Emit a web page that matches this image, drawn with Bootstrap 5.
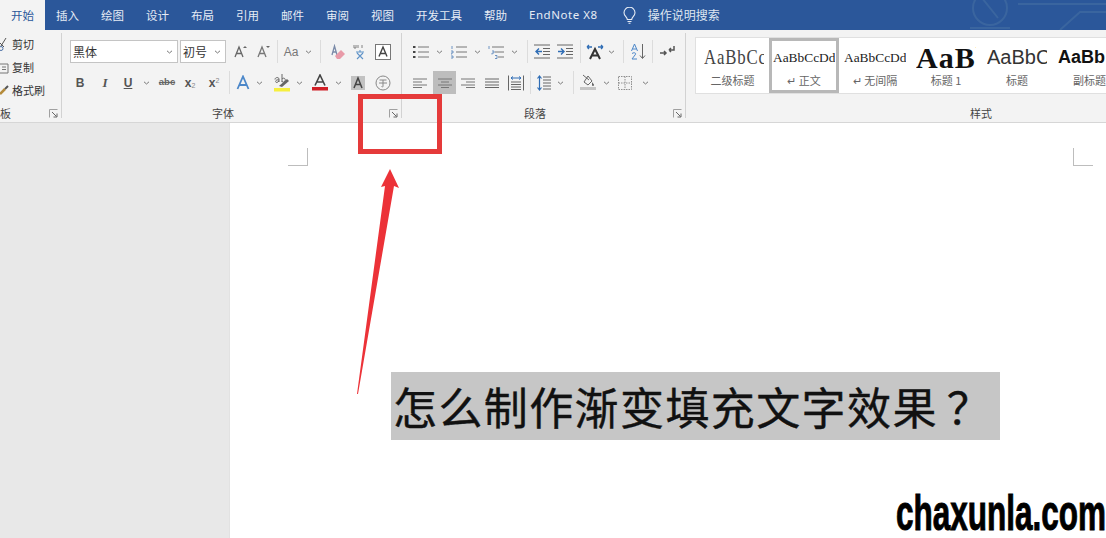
<!DOCTYPE html>
<html lang="zh">
<head>
<meta charset="utf-8">
<title>Word</title>
<link rel="stylesheet" href="https://cdn.jsdelivr.net/npm/bootstrap@5.3.0/dist/css/bootstrap.min.css">
<style>
html,body{height:100%;}
body{width:1106px;height:538px;overflow:hidden;position:relative;background:#e8e8e8;font-family:"Noto Sans CJK SC","Liberation Sans",sans-serif;color:#444;}
.titlebar{height:30px;background:#2b579a;position:relative;overflow:hidden;}
.titlebar .deco{position:absolute;left:900px;top:0;}
.wtabs .nav-link{padding:0 11px;height:30px;line-height:30px;font-size:11.5px;color:#e6ecf5;}
.wtabs .nav-link.active{background:#f3f3f3;color:#2b579a;}
.latin{font-family:"Noto Sans",sans-serif;font-size:11.5px;letter-spacing:.55px;}
.tellme{font-size:12px;color:#dfe6f1;margin-left:14px;gap:12px;height:30px;}
.ribbon{height:93px;background:#f3f3f3;border-bottom:1px solid #d6d6d6;padding:3px 0 4px;}
.rgroup{flex:none;border-right:1px solid #d2d2d2;display:flex;flex-direction:column;}
.g-clip{width:62px;}
.g-font{width:340px;padding:7px 0 0 8px;}
.g-para{width:284px;padding:7px 0 0 8px;}
.g-style{flex:1 1 0;min-width:0;border-right:0;padding:4px 0 0 9px;}
.trow{height:23px;display:flex;align-items:center;}
.trow+.trow{margin-top:8px;}
.slot{flex:none;display:flex;align-items:center;justify-content:center;height:23px;}
.slot svg{flex:none;}
.selcell{background:#bdbdbd;}
.w2{width:2px}.w3{width:3px}.w4{width:4px}.w5{width:5px}.w6{width:6px}.w8{width:8px}.w9{width:9px}.w10{width:10px}.w14{width:14px}.w16{width:16px}.w18{width:18px}.w20{width:20px}.w22{width:22px}.w23{width:23px}.w24{width:24px}.w26{width:26px}.w28{width:28px}.w30{width:30px}.w32{width:32px}.w34{width:34px}.w38{width:38px}
.vsep{flex:none;width:1px;height:23px;background:#dcdcdc;}
.tb{font-family:"Liberation Sans",sans-serif;font-size:12px;color:#555;line-height:1;}
.tbb{font-weight:700;}
.tbi{font-style:italic;font-family:"Liberation Serif",serif;font-size:13px;font-weight:700;}
.tc{font-family:"Liberation Sans",sans-serif;font-size:9.5px;color:#666;font-weight:700;}
.ts{font-size:7px;font-weight:400;color:#888;}
.fsaa{font-family:"Liberation Sans",sans-serif;font-size:12px;color:#777;}
.gfoot{margin-top:auto;margin-bottom:-5px;height:20px;display:grid;align-items:center;font-size:11px;color:#444;line-height:20px;padding-right:3px;}
.gf-font{grid-template-columns:142px auto 1fr;}
.gf-para{grid-template-columns:114px auto 1fr;}
.gf-style{grid-template-columns:275px auto 1fr;}
.launch{justify-self:end;display:flex;}
.fselect{flex:none;height:23px;background:#fff;border:1px solid #c4c4c4;display:flex;align-items:center;justify-content:space-between;padding:0 4px 0 2px;font-size:12px;color:#333;}
.f-name{width:108px;}.f-size{width:46px;margin-left:2px;}
.clipitem{height:23px;font-size:11px;color:#333;display:flex;align-items:center;}
.clipicon{width:12px;flex:none;display:flex;justify-content:flex-start;}
.clipfoot{display:flex;justify-content:space-between;align-items:center;height:20px;margin-top:auto;margin-bottom:-5px;font-size:11px;padding-right:3px;}
.gallery{width:100%;height:57px;background:#fff;border:1px solid #e0e0e0;border-right:0;display:flex;flex:none;}
.styleitem{flex:none;height:55px;overflow:hidden;text-align:center;display:flex;flex-direction:column;align-items:center;padding-top:7px;}
.styleitem .pv{height:25px;line-height:25px;white-space:nowrap;overflow:hidden;color:#222;}
.styleitem .lb{font-size:11px;color:#666;line-height:16px;margin-top:2px;white-space:nowrap;}
.si1{width:73px}.si2{width:70px;border:3px solid #b8b8b8;padding-top:4px;}.si3{width:72px}.si4{width:70px}.si5{width:72px}.si6{width:53px;align-items:flex-end;}
.pv1{font-family:"Liberation Serif",serif;font-size:21px;letter-spacing:1px;width:75px;align-self:flex-start;margin-left:8px;transform:scaleX(.8);transform-origin:left center;color:#444 !important;}
.pv2{font-family:"Liberation Serif",serif;font-size:13.4px;width:62px;}
.pv4{font-family:"Liberation Serif",serif;font-weight:700;font-size:30px;letter-spacing:1px;width:60px;color:#111 !important;}
.pv5{font-family:"Liberation Sans",sans-serif;font-size:20px;width:60px;color:#333 !important;}
.pv6{font-family:"Liberation Sans",sans-serif;font-weight:700;font-size:18px;width:48px;color:#111 !important;text-align:left;}
.workspace{height:415px;}
.leftpane{width:230px;flex:none;background:#e8e8e8;border-right:1px solid #e2e2e2;}
.docpage{flex:1 1 0;background:#fff;}
.marks{padding:25px 13px 0 58px;display:flex;justify-content:space-between;}
.cmark{width:20px;height:18px;border-bottom:1px solid #bdbdbd;}
.cm-l{border-right:1px solid #bdbdbd;}
.cm-r{border-left:1px solid #bdbdbd;}
.headline{margin:206px 0 0 161px;width:609px;height:68px;background:#c6c6c6;font-size:44px;font-weight:400;-webkit-text-stroke:.4px #111;line-height:68px;letter-spacing:1.4px;color:#111;padding-left:2px;white-space:nowrap;overflow:hidden;font-family:"Noto Sans CJK SC",sans-serif;}
.qmark{padding-left:9px;}
.redbox{position:absolute;left:358px;top:94px;width:84px;height:60px;border:5px solid #e53a3a;}
.redarrow{position:absolute;left:340px;top:160px;}
.wmark{position:absolute;left:896px;top:486px;font-family:"Liberation Sans",sans-serif;font-weight:700;font-size:50px;line-height:54px;color:#000;-webkit-text-stroke:1px #000;white-space:nowrap;transform:scaleX(.63);transform-origin:left center;}
</style>
</head>
<body>
<svg width="0" height="0" class="d-block position-absolute">
<defs>
<symbol id="chev" viewBox="0 0 7 4"><path d="M1 .8 3.5 3 6 .8" fill="none" stroke="#777" stroke-width="1"/></symbol>
<symbol id="launch" viewBox="0 0 9 9"><path d="M.5 8.500V.5H8.500" fill="none" stroke="#a0a0a0"/><path d="M3 3 7.500 7.500M8 4.500V8H4.500" fill="none" stroke="#666"/></symbol>
<symbol id="lines" viewBox="0 0 14 10"><path d="M0 1H14M0 4H9M0 7H14M0 9.500H9" stroke="#777" stroke-width="1" fill="none"/></symbol>
</defs>
</svg>

<header class="titlebar d-flex align-items-center">
<svg class="deco" width="206" height="30" viewBox="0 0 206 30"><g fill="none" stroke="#3a659f" stroke-width="2"><circle cx="90" cy="8" r="17"/><path d="M82 -2 98 18M70 28H110M118 4H206M160 30 180 12H206"/></g></svg>
<ul class="nav wtabs flex-nowrap">
<li class="nav-item"><a class="nav-link active" href="#">开始</a></li>
<li class="nav-item"><a class="nav-link" href="#">插入</a></li>
<li class="nav-item"><a class="nav-link" href="#">绘图</a></li>
<li class="nav-item"><a class="nav-link" href="#">设计</a></li>
<li class="nav-item"><a class="nav-link" href="#">布局</a></li>
<li class="nav-item"><a class="nav-link" href="#">引用</a></li>
<li class="nav-item"><a class="nav-link" href="#">邮件</a></li>
<li class="nav-item"><a class="nav-link" href="#">审阅</a></li>
<li class="nav-item"><a class="nav-link" href="#">视图</a></li>
<li class="nav-item"><a class="nav-link" href="#">开发工具</a></li>
<li class="nav-item"><a class="nav-link" href="#">帮助</a></li>
<li class="nav-item"><a class="nav-link latin" href="#">EndNote X8</a></li>
</ul>
<div class="tellme d-flex align-items-center">
<svg width="13" height="17" viewBox="0 0 13 17"><path d="M4.300 12.500C4.300 10 1 9 1 5.700A5.500 5.500 0 0 1 12 5.700C12 9 8.700 10 8.700 12.500ZM4.500 14.500H8.500M5.500 16.300H7.500" fill="none" stroke="#e6ecf5" stroke-width="1.100"/></svg>
<span>操作说明搜索</span>
</div>
</header>

<section class="ribbon d-flex">
<div class="rgroup g-clip">
<div class="clipitem"><span class="clipicon"><svg width="7" height="14" viewBox="0 0 7 14"><path d="M6 0 1 8M0 5l4 4" stroke="#555" fill="none"/><circle cx="1" cy="10.500" r="2" fill="none" stroke="#4a6fa5"/></svg></span>剪切</div>
<div class="clipitem"><span class="clipicon"><svg width="9" height="13" viewBox="0 0 9 13"><path d="M0 3H8V12H0M2 6H6M2 8.500H6" fill="none" stroke="#777"/></svg></span>复制</div>
<div class="clipitem"><span class="clipicon"><svg width="9" height="12" viewBox="0 0 9 12"><path d="M0 9 5 4" stroke="#b58b3a" stroke-width="2.500"/><path d="M5 4 8 1" stroke="#555" stroke-width="2"/></svg></span>格式刷</div>
<div class="clipfoot"><span>板</span><svg width="9" height="9"><use href="#launch"/></svg></div>
</div>

<div class="rgroup g-font">
<div class="trow">
<div class="fselect f-name"><span>黑体</span><svg width="7" height="4"><use href="#chev"/></svg></div>
<div class="fselect f-size"><span>初号</span><svg width="7" height="4"><use href="#chev"/></svg></div>
<span class="slot w28"><svg width="13" height="13" viewBox="0 0 13 13"><path d="M1 12 5 2 9 12M2.500 8.500H7.500" fill="none" stroke="#666" stroke-width="1.300"/><path d="M9 3 11 1 13 3" fill="#666"/></svg></span>
<span class="slot w18"><svg width="13" height="13" viewBox="0 0 13 13"><path d="M1 12 5 2 9 12M2.500 8.500H7.500" fill="none" stroke="#777" stroke-width="1.300"/><path d="M9 1 11 3 13 1" fill="#666"/></svg></span>
<span class="slot w5"></span><i class="vsep"></i>
<span class="slot w26"><span class="fsaa">Aa</span></span>
<span class="slot w8"><svg width="7" height="4"><use href="#chev"/></svg></span>
<span class="slot w8"></span><i class="vsep"></i>
<span class="slot w32"><svg width="15" height="16" viewBox="0 0 15 16"><path d="M2 11 4.500 2 7 11M3 8H6" fill="none" stroke="#7a8aa8" stroke-width="1.300"/><path d="M5 12 11 6 15 10 10 15H7Z" fill="#e89aa8"/></svg></span>
<span class="slot w14"><svg width="14" height="16" viewBox="0 0 14 16"><path d="M1 1V4H3V1M5 1V4M9 1V4" stroke="#777" fill="none" stroke-width=".9"/><path d="M3 8H11M7 6V8M4 9 10 15M10 9 4 15" stroke="#5f93c8" stroke-width="1.100" fill="none"/></svg></span>
<span class="slot w32"><svg width="16" height="16" viewBox="0 0 16 16"><rect x=".5" y=".5" width="15" height="15" fill="#fff" stroke="#777"/><path d="M4 12.500 8 3 12 12.500M5.500 9.500H10.500" fill="none" stroke="#444" stroke-width="1.400"/></svg></span>
</div>
<div class="trow">
<span class="slot w20"><span class="tb tbb">B</span></span>
<span class="slot w30"><span class="tb tbi">I</span></span>
<span class="slot w16"><u class="tb tbb">U</u></span>
<span class="slot w20"><svg width="7" height="4"><use href="#chev"/></svg></span>
<span class="slot w22"><s class="tc">abc</s></span>
<span class="slot w24"><span class="tb tbb">x<sub class="ts">2</sub></span></span>
<span class="slot w24"><span class="tb tbb">x<sup class="ts">2</sup></span></span>
<span class="slot w3"></span><i class="vsep"></i>
<span class="slot w26"><svg width="14" height="15" viewBox="0 0 14 15"><path d="M1.500 14 7 1.500 12.500 14M3.500 10H10.500" fill="none" stroke="#4c87c9" stroke-width="1.800"/></svg></span>
<span class="slot w6"><svg width="7" height="4"><use href="#chev"/></svg></span>
<span class="slot w5"></span>
<span class="slot w30"><svg width="18" height="19" viewBox="0 0 18 19"><path d="M2 6.500C2 4 6 4 6 6V9M6 7C2 6 2 10 4 9.500L6 8M9 1V9M9 6C11 4 13 6 12 8 11 10 9 9 9 8" fill="none" stroke="#666"/><path d="M6 13 14 6 16 8 9 14Z" fill="#666"/><rect x="1" y="15" width="16" height="3.500" fill="#f6ef3e"/></svg></span>
<span class="slot w4"><svg width="7" height="4"><use href="#chev"/></svg></span>
<span class="slot w6"></span>
<span class="slot w26"><svg width="16" height="17" viewBox="0 0 16 17"><path d="M3 11.500 8 1 13 11.500M4.800 8H11.200" fill="none" stroke="#444" stroke-width="1.600"/><rect y="13" width="16" height="3.500" fill="#d01f26"/></svg></span>
<span class="slot w10"><svg width="7" height="4"><use href="#chev"/></svg></span>
<span class="slot w30"><svg width="14" height="14" viewBox="0 0 14 14"><rect width="14" height="14" fill="#c2c2c2"/><path d="M3 12 7 2 11 12M4.500 8.500H9.500" fill="none" stroke="#444" stroke-width="1.500"/></svg></span>
<span class="slot w20"><svg width="16" height="16" viewBox="0 0 16 16"><circle cx="8" cy="8" r="7" fill="none" stroke="#888"/><path d="M4.500 5H11.500M8 5V11.500C8 12 7 12 6.500 11.500M4 8H12" fill="none" stroke="#888"/></svg></span>
</div>
<div class="gfoot gf-font"><span></span><span>字体</span><span class="launch"><svg width="9" height="9"><use href="#launch"/></svg></span></div>
</div>

<div class="rgroup g-para">
<div class="trow">
<span class="slot w22"><svg width="16" height="14" viewBox="0 0 16 14"><path d="M5 2H16M5 7H16M5 12H16" stroke="#777" fill="none"/><path d="M0 2H2.500M0 7H2.500M0 12H2.500" stroke="#444" stroke-width="2"/></svg></span>
<span class="slot w14"><svg width="7" height="4"><use href="#chev"/></svg></span>
<span class="slot w26"><svg width="16" height="14" viewBox="0 0 16 14"><path d="M5 2H16M5 7H16M5 12H16" stroke="#777" fill="none"/><path d="M1 1V4M0 6H2V8H0V10M0 11H2V13H0" stroke="#4c7bb5" stroke-width=".8" fill="none"/></svg></span>
<span class="slot w10"><svg width="7" height="4"><use href="#chev"/></svg></span>
<span class="slot w28"><svg width="16" height="14" viewBox="0 0 16 14"><path d="M4 2H16M7 7H16M10 12H16" stroke="#777" fill="none"/><path d="M1 1V4M4 6H6V8H4V9.500M7 10.500H9V13.500H7" stroke="#4c7bb5" stroke-width=".8" fill="none"/></svg></span>
<span class="slot w8"><svg width="7" height="4"><use href="#chev"/></svg></span>
<span class="slot w9"></span><i class="vsep"></i>
<span class="slot w28"><svg width="16" height="15" viewBox="0 0 16 15"><path d="M0 1H16M9 4.500H16M9 7.500H16M9 10.500H16M0 14H16" stroke="#666" fill="none"/><path d="M8 7.500H2M5 4.500 2 7.500 5 10.500" stroke="#2f6db5" stroke-width="1.400" fill="none"/></svg></span>
<span class="slot w18"><svg width="16" height="15" viewBox="0 0 16 15"><path d="M0 1H16M9 4.500H16M9 7.500H16M9 10.500H16M0 14H16" stroke="#666" fill="none"/><path d="M1 7.500H7M4 4.500 7 7.500 4 10.500" stroke="#2f6db5" stroke-width="1.400" fill="none"/></svg></span>
<span class="slot w6"></span><i class="vsep"></i>
<span class="slot w28"><svg width="18" height="16" viewBox="0 0 18 16"><path d="M4 15 9 5 14 15M5.800 11.500H12.200" fill="none" stroke="#333" stroke-width="2"/><path d="M1 3H6M1 3 3 1M1 3 3 5M17 3H12M17 3 15 1M17 3 15 5" stroke="#2f6db5" stroke-width="1.300" fill="none"/></svg></span>
<span class="slot w4"><svg width="7" height="4"><use href="#chev"/></svg></span>
<span class="slot w10"></span><i class="vsep"></i>
<span class="slot w28"><svg width="15" height="17" viewBox="0 0 15 17"><path d="M0.500 8 3.500 1 6.500 8M1.500 6H5.500" fill="none" stroke="#4c87c9"/><path d="M1 10.500C3 9 6 10 4 12L1 16H6" fill="none" stroke="#4c87c9"/><path d="M11.500 1V15M9 12.500 11.500 15.500 14 12.500" fill="none" stroke="#666"/></svg></span>
<i class="vsep"></i>
<span class="slot w28"><svg width="15" height="11" viewBox="0 0 15 11"><path d="M14 0V4H9M9 4 11 2M9 4 11 6" fill="none" stroke="#555" stroke-width="1.500"/><path d="M0 7H6M4 5 6 7 4 9" fill="none" stroke="#555" stroke-width="1.500"/></svg></span>
</div>
<div class="trow">
<span class="slot w20"><svg width="14" height="10"><use href="#lines"/></svg></span>
<span class="slot w3"></span>
<span class="slot w23 selcell"><svg width="14" height="10" viewBox="0 0 14 10"><path d="M0 1H14M3 4H11M0 7H14M3 9.500H11" stroke="#777" fill="none"/></svg></span>
<span class="slot w24"><svg width="14" height="10" viewBox="0 0 14 10"><path d="M0 1H14M5 4H14M0 7H14M5 9.500H14" stroke="#777" fill="none"/></svg></span>
<span class="slot w24"><svg width="14" height="10" viewBox="0 0 14 10"><path d="M0 1H14M0 4H14M0 7H14M0 9.500H14" stroke="#666" fill="none"/></svg></span>
<span class="slot w24"><svg width="16" height="16" viewBox="0 0 16 16"><path d="M.5 .5V15.500M15.500 .5V15.500" stroke="#666" fill="none"/><path d="M3 3H13M3 3 5 1.500M3 3 5 4.500M13 3 11 1.500M13 3 11 4.500" stroke="#2f6db5" fill="none"/><path d="M3 7H13M3 9.500H13M3 12H13M3 14.500H13" stroke="#666" fill="none"/></svg></span>
<span class="slot w2"></span><i class="vsep"></i>
<span class="slot w26"><svg width="14" height="16" viewBox="0 0 14 16"><path d="M6 2H14M6 5H14M6 8H14M6 11H14M6 14H14" stroke="#666" fill="none"/><path d="M2.500 1V15M.5 3.500 2.500 1 4.500 3.500M.5 12.500 2.500 15 4.500 12.500" stroke="#2f6db5" stroke-width="1.200" fill="none"/></svg></span>
<span class="slot w6"><svg width="7" height="4"><use href="#chev"/></svg></span>
<span class="slot w10"></span><i class="vsep"></i>
<span class="slot w28"><svg width="16" height="17" viewBox="0 0 16 17"><path d="M4 8 8 2 12 7 8 11Z" fill="none" stroke="#666"/><path d="M3 1 9 6" stroke="#666"/><path d="M12 8C13 9.500 14 10 14 11A1 1 0 0 1 12 11Z" fill="#666"/><rect y="13" width="16" height="3" fill="#c4c4c4"/></svg></span>
<span class="slot w8"><svg width="7" height="4"><use href="#chev"/></svg></span>
<span class="slot w30"><svg width="14" height="14" viewBox="0 0 14 14"><path d="M.5 .5H13.500V13.500H.5ZM7 .5V13.500M.5 7H13.500" fill="none" stroke="#8f8f8f" stroke-dasharray="1.500 1"/></svg></span>
<span class="slot w10"><svg width="7" height="4"><use href="#chev"/></svg></span>
</div>
<div class="gfoot gf-para"><span></span><span>段落</span><span class="launch"><svg width="9" height="9"><use href="#launch"/></svg></span></div>
</div>

<div class="rgroup g-style">
<div class="gallery">
<div class="styleitem si1"><div class="pv pv1">AaBbCcDd</div><div class="lb">二级标题</div></div>
<div class="styleitem si2"><div class="pv pv2">AaBbCcDd</div><div class="lb">↵ 正文</div></div>
<div class="styleitem si3"><div class="pv pv2">AaBbCcDd</div><div class="lb">↵ 无间隔</div></div>
<div class="styleitem si4"><div class="pv pv4">AaBbC</div><div class="lb">标题 1</div></div>
<div class="styleitem si5"><div class="pv pv5">AaBbCc</div><div class="lb">标题</div></div>
<div class="styleitem si6"><div class="pv pv6">AaBb</div><div class="lb">副标题</div></div>
</div>
<div class="gfoot gf-style"><span></span><span>样式</span><span></span></div>
</div>
</section>

<main class="workspace d-flex">
<div class="leftpane"></div>
<div class="docpage">
<div class="marks"><span class="cmark cm-l"></span><span class="cmark cm-r"></span></div>
<div class="headline">怎么制作渐变填充文字效果<span class="qmark">？</span></div>
</div>
</main>

<div class="redbox"></div>
<svg class="redarrow" width="70" height="240" viewBox="340 160 70 240"><polygon points="390,169 399,188 394,186 358,394 357,394 385,186 381,187" fill="#ec3238"/></svg>
<div class="wmark">chaxunla.com</div>
</body>
</html>
